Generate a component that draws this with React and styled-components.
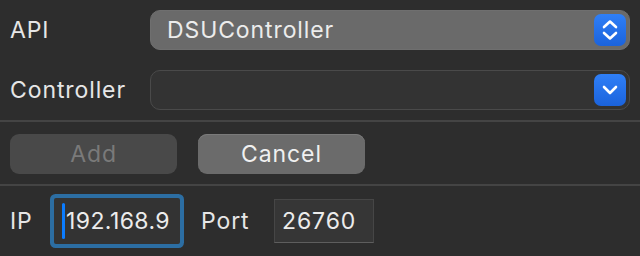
import React from 'react';
import styled, { createGlobalStyle } from 'styled-components';

const GlobalStyle = createGlobalStyle`
    body {
        margin: 0;
        background: #2d2d2d;
        font-family: Inter, 'Liberation Sans', sans-serif;
    }
`;

const Panel = styled.div`
    width: 640px;
    height: 256px;
    overflow: hidden;
    background: #2d2d2d;
    color: #e6e6e6;
    font-size: 23px;
    letter-spacing: 0.9px;
`;

const FormSection = styled.div`
    display: flex;
    flex-direction: column;
    gap: 20px;
    padding: 10px 10px 10px 10px;
`;

const Row = styled.div`
    display: flex;
    align-items: center;
    height: 40px;
`;

const Label = styled.span`
    box-sizing: border-box;
    width: ${props => props.width || 140}px;
    padding-left: ${props => props.indent || 0}px;
    flex-shrink: 0;
    padding-bottom: 1px;
`;

const Popup = styled.div`
    flex: 1;
    height: 40px;
    box-sizing: border-box;
    display: flex;
    align-items: center;
    justify-content: space-between;
    padding: 0 3px 0 16px;
    border-radius: 10px;
    background: ${props => props.filled ? '#6a6a6a' : '#333333'};
    border: 1px solid ${props => props.filled ? '#6f6f6f' : '#4a4a4a'};
    color: #ececec;
`;

const Stepper = styled.div`
    width: 32px;
    height: 32px;
    border-radius: 7px;
    background: linear-gradient(#2f7ff7, #1b63dc);
    display: flex;
    align-items: center;
    justify-content: center;
`;

const Separator = styled.div`
    height: 2px;
    background: #444444;
`;

const ButtonRow = styled.div`
    display: flex;
    gap: 21px;
    padding: 12px 10px 10px;
`;

const Button = styled.div`
    width: 167px;
    height: 40px;
    border-radius: 9px;
    display: flex;
    align-items: center;
    justify-content: center;
    background: ${props => props.disabled ? '#494949' : '#6b6b6b'};
    color: ${props => props.disabled ? '#7a7a7a' : '#f0f0f0'};
    box-shadow: ${props => props.disabled ? 'none' : 'inset 0 1px 0 #7a7a7a'};
`;

const AddressRow = styled.div`
    display: flex;
    align-items: center;
    padding: 12px 10px 0 10px;
`;

const FocusField = styled.div`
    width: 126px;
    height: 46px;
    box-sizing: border-box;
    margin-left: 4px;
    background: #333333;
    box-shadow: 0 0 0 4px #2c6ea3;
    border-radius: 2px;
    display: flex;
    align-items: center;
    padding-left: 8px;
    overflow: hidden;
    white-space: nowrap;
    letter-spacing: 0.4px;
    color: #ececec;
`;

const Caret = styled.span`
    width: 3px;
    height: 36px;
    border-radius: 2px;
    background: #0b7cff;
    flex-shrink: 0;
    margin-right: 1px;
`;

const PortField = styled.div`
    width: 100px;
    height: 44px;
    box-sizing: border-box;
    background: #363636;
    border: 1px solid #464646;
    border-bottom-color: #5e5e5e;
    display: flex;
    align-items: center;
    padding-left: 7px;
    color: #ececec;
`;

const UpDown = () => (
    <svg width="32" height="32" viewBox="0 0 32 32" fill="none" stroke="#fff" strokeWidth="2.6" strokeLinecap="round" strokeLinejoin="round">
        <polyline points="10,13 16,7.5 22,13" />
        <polyline points="10,19 16,24.5 22,19" />
    </svg>
);

const Down = () => (
    <svg width="32" height="32" viewBox="0 0 32 32" fill="none" stroke="#fff" strokeWidth="2.6" strokeLinecap="round" strokeLinejoin="round">
        <polyline points="10,13 16,19 22,13" />
    </svg>
);

const App = () => {
    return (
        <Panel>
            <GlobalStyle />
            <FormSection>
                <Row>
                    <Label>API</Label>
                    <Popup filled>
                        <span>DSUController</span>
                        <Stepper><UpDown /></Stepper>
                    </Popup>
                </Row>
                <Row>
                    <Label>Controller</Label>
                    <Popup>
                        <span />
                        <Stepper><Down /></Stepper>
                    </Popup>
                </Row>
            </FormSection>
            <Separator />
            <ButtonRow>
                <Button disabled>Add</Button>
                <Button>Cancel</Button>
            </ButtonRow>
            <Separator />
            <AddressRow>
                <Label width={40}>IP</Label>
                <FocusField>
                    <Caret />
                    192.168.9
                </FocusField>
                <Label width={94} indent={21}>Port</Label>
                <PortField>26760</PortField>
            </AddressRow>
        </Panel>
    );
};

export default App;
